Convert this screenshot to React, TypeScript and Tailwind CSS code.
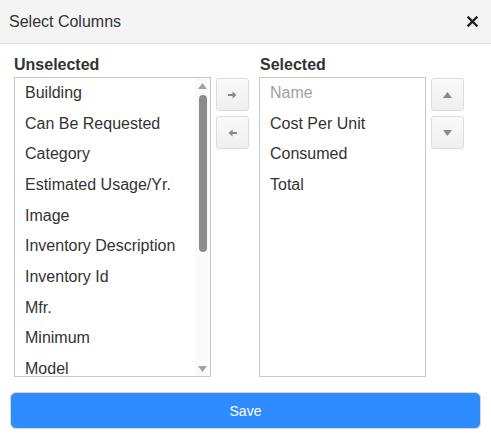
import React from 'react';

const unselected = [
  'Building',
  'Can Be Requested',
  'Category',
  'Estimated Usage/Yr.',
  'Image',
  'Inventory Description',
  'Inventory Id',
  'Mfr.',
  'Minimum',
  'Model',
];

const selected = [
  { label: 'Name', disabled: true },
  { label: 'Cost Per Unit' },
  { label: 'Consumed' },
  { label: 'Total' },
];

function SmallButton({ children }: { children: React.ReactNode }) {
  return (
    <button className="w-[33px] h-[33px] flex items-center justify-center rounded-[3px] border border-[#dcdcdc] bg-gradient-to-b from-[#fafafa] to-[#efefef] text-[#8a8a8a]">
      {children}
    </button>
  );
}

function ArrowRight() {
  return (
    <svg width="9" height="8" viewBox="0 0 9 8" fill="currentColor">
      <rect x="0" y="3" width="5" height="2" />
      <path d="M4.5 0.5 L8.5 4 L4.5 7.5 Z" />
    </svg>
  );
}

function ArrowLeft() {
  return (
    <svg width="9" height="8" viewBox="0 0 9 8" fill="currentColor">
      <rect x="4" y="3" width="5" height="2" />
      <path d="M4.5 0.5 L0.5 4 L4.5 7.5 Z" />
    </svg>
  );
}

function Triangle({ up }: { up?: boolean }) {
  return (
    <svg width="9" height="6" viewBox="0 0 9 6" fill="currentColor">
      {up ? <path d="M0 6 L4.5 0 L9 6 Z" /> : <path d="M0 0 L4.5 6 L9 0 Z" />}
    </svg>
  );
}

export default function App() {
  return (
    <div className="w-[491px] h-[439px] bg-white text-[#333] overflow-hidden" style={{ fontFamily: '"Liberation Sans", Arial, sans-serif' }}>
      <div className="h-[44px] flex items-center justify-between pl-[9px] pr-[13px] bg-[#f4f4f4] border-b border-[#dedede]">
        <span className="text-[16px]">Select Columns</span>
        <svg width="11" height="11" viewBox="0 0 11 11" className="text-[#222]">
          <path d="M1.5 1.5 L9.5 9.5 M9.5 1.5 L1.5 9.5" stroke="currentColor" strokeWidth="2.4" strokeLinecap="square" />
        </svg>
      </div>

      <div className="flex pl-[14px] pt-[11px]">
        <div className="flex flex-col">
          <div className="text-[16px] font-bold leading-[20px] h-[22px]">Unselected</div>
          <div className="w-[197px] h-[300px] border border-[#c8c8c8] flex overflow-hidden">
            <div className="flex-1 overflow-hidden">
              {unselected.map((c) => (
                <div key={c} className="h-[30.67px] leading-[30px] pl-[10px] text-[16px] text-[#333] whitespace-nowrap">
                  {c}
                </div>
              ))}
            </div>
            <div className="w-[15px] bg-[#fafafa] flex flex-col items-center text-[#a3a3a3] pt-[5px] pb-[4px]">
              <Triangle up />
              <div className="w-[8px] h-[157px] mt-[6px] rounded-[4px] bg-[#8c8c8c]" />
              <div className="flex-1" />
              <Triangle />
            </div>
          </div>
        </div>

        <div className="flex flex-col gap-[5px] pt-[23px] ml-[5px]">
          <SmallButton>
            <ArrowRight />
          </SmallButton>
          <SmallButton>
            <ArrowLeft />
          </SmallButton>
        </div>

        <div className="flex flex-col ml-[10px]">
          <div className="text-[16px] font-bold leading-[20px] h-[22px] pl-[1px]">Selected</div>
          <div className="w-[167px] h-[300px] border border-[#c8c8c8] overflow-hidden">
            {selected.map((c) => (
              <div
                key={c.label}
                className={`h-[30.67px] leading-[30px] pl-[10px] text-[16px] whitespace-nowrap ${c.disabled ? 'text-[#a0a0a0]' : 'text-[#333]'}`}
              >
                {c.label}
              </div>
            ))}
          </div>
        </div>

        <div className="flex flex-col gap-[5px] pt-[23px] ml-[5px]">
          <SmallButton>
            <Triangle up />
          </SmallButton>
          <SmallButton>
            <Triangle />
          </SmallButton>
        </div>
      </div>

      <div className="px-[10px] pt-[15px]">
        <button className="w-[471px] h-[37px] pt-[1px] rounded-[6px] bg-[#2d8cff] border border-[#d5d5d5] text-white text-[14px]">
          Save
        </button>
      </div>
    </div>
  );
}
